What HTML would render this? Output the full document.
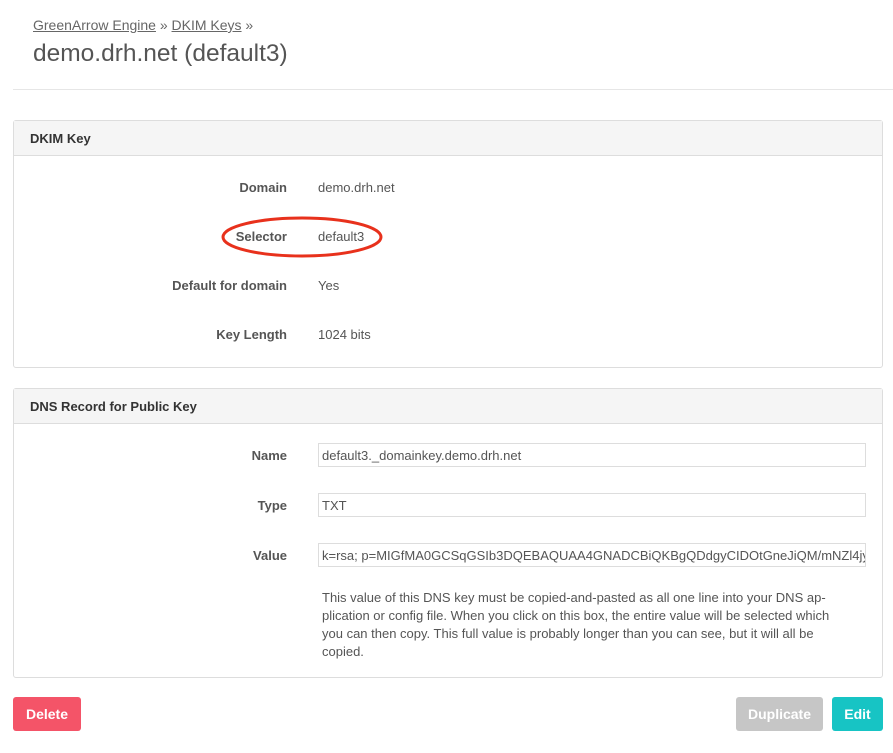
<!DOCTYPE html>
<html><head><meta charset="utf-8"><style>
*{box-sizing:border-box;margin:0;padding:0}
body{width:893px;height:753px;background:#fff;font-family:"Liberation Sans",sans-serif;color:#555;position:relative;overflow:hidden}
.a{position:absolute;white-space:nowrap}
.crumb{left:33px;top:17px;font-size:14px;color:#666}
.crumb u{text-decoration:underline}
.title{left:33px;top:40px;font-size:24.5px;color:#555}
.hr{left:13px;right:0;top:89px;height:1px;background:#e6e6e6}
.panel{left:13px;width:870px;border:1px solid #ddd;border-radius:3px}
.ph{height:35px;background:#f5f5f5;border-bottom:1px solid #ddd;font-size:13px;font-weight:bold;color:#333;padding:10px 0 0 16px}
.lab{font-size:13px;font-weight:bold;color:#555;right:606px;text-align:right}
.val{font-size:13px;color:#555;left:318px}
.inp{left:318px;width:548px;height:24px;border:1px solid #ddd;font-size:13px;color:#555;padding:4px 0 0 3px;overflow:hidden}
.help{left:322px;top:589px;width:522px;font-size:13px;line-height:18px;white-space:normal;color:#555}
.btn{height:34px;top:697px;border-radius:3px;color:#fff;font-size:14px;font-weight:bold;text-align:center;padding-top:9px}
</style></head><body>
<div class="a crumb"><u>GreenArrow Engine</u> » <u>DKIM Keys</u> »</div>
<div class="a title">demo.drh.net (default3)</div>
<div class="a hr"></div>
<div class="a panel" style="top:120px;height:248px"><div class="ph">DKIM Key</div></div>
<div class="a lab" style="top:180px">Domain</div><div class="a val" style="top:180px">demo.drh.net</div>
<div class="a lab" style="top:229px">Selector</div><div class="a val" style="top:229px">default3</div>
<div class="a lab" style="top:278px">Default for domain</div><div class="a val" style="top:278px">Yes</div>
<div class="a lab" style="top:327px">Key Length</div><div class="a val" style="top:327px">1024 bits</div>
<svg class="a" style="left:0;top:0" width="893" height="753"><ellipse cx="302" cy="237" rx="79" ry="19" fill="none" stroke="#e8311c" stroke-width="3"/></svg>
<div class="a panel" style="top:388px;height:290px"><div class="ph">DNS Record for Public Key</div></div>
<div class="a lab" style="top:448px">Name</div><div class="a inp" style="top:443px">default3._domainkey.demo.drh.net</div>
<div class="a lab" style="top:498px">Type</div><div class="a inp" style="top:493px">TXT</div>
<div class="a lab" style="top:548px">Value</div><div class="a inp" style="top:543px">k=rsa; p=MIGfMA0GCSqGSIb3DQEBAQUAA4GNADCBiQKBgQDdgyCIDOtGneJiQM/mNZl4jywvIHPU/Nx</div>
<div class="a help">This value of this DNS key must be copied-and-pasted as all one line into your DNS ap­plication or config file. When you click on this box, the entire value will be selected which you can then copy. This full value is probably longer than you can see, but it will all be copied.</div>
<div class="a btn" style="left:13px;width:68px;background:#f45468">Delete</div>
<div class="a btn" style="left:736px;width:87px;background:#c6c6c6">Duplicate</div>
<div class="a btn" style="left:832px;width:51px;background:#17c4c4">Edit</div>
</body></html>
